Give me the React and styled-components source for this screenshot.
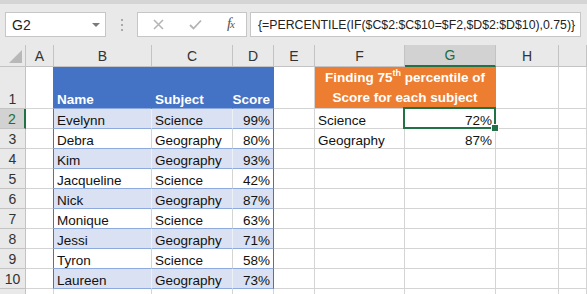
import React from 'react';
import styled, { createGlobalStyle, css } from 'styled-components';

const GlobalStyle = createGlobalStyle`
  html, body {
    margin: 0;
    padding: 0;
    background: #ffffff;
  }
  * {
    box-sizing: border-box;
  }
`;

const Window = styled.div`
  width: 587px;
  height: 294px;
  overflow: hidden;
  background: #ffffff;
  font-family: "Liberation Sans", Arial, sans-serif;
`;

const TopStrip = styled.div`
  height: 4px;
  background: #d5d5d5;
`;

const FormulaBar = styled.div`
  height: 41px;
  background: #e9e9e9;
  display: flex;
  align-items: center;
  padding-left: 5px;
  padding-right: 6px;
`;

const Box = styled.div`
  height: 25px;
  background: #ffffff;
  border: 1px solid #c6c6c6;
  display: flex;
  align-items: center;
`;

const NameBox = styled(Box)`
  width: 101px;
  justify-content: space-between;
  padding: 0 5px 0 6px;
  font-size: 14px;
  color: #222;
`;

const Caret = styled.span`
  width: 0;
  height: 0;
  border-left: 4px solid transparent;
  border-right: 4px solid transparent;
  border-top: 4px solid #7a7a7a;
`;

const Grip = styled.div`
  width: 31px;
  display: flex;
  flex-direction: column;
  align-items: center;
  gap: 3px;
`;

const Dot = styled.span`
  width: 2px;
  height: 2px;
  background: #a9a9a9;
`;

const ButtonBox = styled(Box)`
  width: 110px;
  padding: 0 12px 0 15px;
  justify-content: space-between;
`;

const Fx = styled.span`
  font-family: "Liberation Serif", "Times New Roman", serif;
  font-style: italic;
  font-size: 15px;
  color: #555;
  letter-spacing: -1px;
  margin-top: -2px;

  small {
    font-size: 11px;
  }
`;

const FormulaBox = styled(Box)`
  flex: 1;
  margin-left: 3px;
  padding-left: 7px;
  font-size: 12.3px;
  color: #222;
  white-space: nowrap;
`;

const Sheet = styled.div`
  display: grid;
  grid-template-columns: 26px 28px 98px 81px 41px 41px 90px 91px 63px 1fr;
  grid-template-rows: 22px 42px repeat(10, 20px);
`;

const HeadCell = styled.div`
  background: ${({ $selected }) => ($selected ? '#d2d2d2' : '#e9e9e9')};
  border-right: 1px solid #c3c3c3;
  border-bottom: ${({ $selected }) => ($selected ? '2px solid #217346' : '1px solid #c3c3c3')};
  display: flex;
  align-items: center;
  justify-content: center;
  font-size: 14px;
  color: ${({ $selected }) => ($selected ? '#1e6b41' : '#333')};
`;

const RowHead = styled.div`
  background: ${({ $selected }) => ($selected ? '#d2d2d2' : '#e9e9e9')};
  border-right: ${({ $selected }) => ($selected ? '2px solid #217346' : '1px solid #c3c3c3')};
  border-bottom: 1px solid #c3c3c3;
  display: flex;
  align-items: flex-end;
  justify-content: center;
  padding-bottom: 1px;
  font-size: 14px;
  color: ${({ $selected }) => ($selected ? '#1e6b41' : '#333')};
`;

const Corner = styled.div`
  background: #e9e9e9;
  border-right: 1px solid #c3c3c3;
  border-bottom: 1px solid #c3c3c3;
  display: flex;
  align-items: flex-end;
  justify-content: flex-end;
  padding: 0 3px 3px 0;
`;

const Cell = styled.div`
  background: ${({ $bg }) => $bg || '#ffffff'};
  border-right: 1px solid ${({ $vline }) => $vline || '#d4d4d4'};
  border-bottom: 1px solid ${({ $hline }) => $hline || '#d4d4d4'};
  display: flex;
  align-items: flex-end;
  justify-content: ${({ $right }) => ($right ? 'flex-end' : 'flex-start')};
  padding: 0 3px 0 3px;
  font-size: 13.5px;
  color: #111;
  white-space: nowrap;
  position: relative;
  ${({ $bold }) =>
    $bold &&
    css`
      font-weight: 700;
      color: #ffffff;
      padding-bottom: 1px;
    `}
  ${({ $span }) => $span && css`grid-column: span ${$span};`}
`;

const TitleCell = styled(Cell)`
  flex-direction: column;
  align-items: center;
  justify-content: flex-end;
  line-height: 20px;
  padding-bottom: 0;

  sup {
    font-size: 9px;
    line-height: 0;
    vertical-align: 6px;
  }
`;

const Selected = styled(Cell)`
  &::after {
    content: '';
    position: absolute;
    left: -2px;
    top: -2px;
    right: -1px;
    bottom: -1px;
    border: 2px solid #217346;
  }
  &::before {
    content: '';
    position: absolute;
    right: -4px;
    bottom: -4px;
    width: 6px;
    height: 6px;
    background: #217346;
    border: 1px solid #ffffff;
    z-index: 2;
  }
`;

const BLUE = '#4472c4';
const BAND = '#d9e1f2';
const TLINE = '#8ea9db';
const ORANGE = '#ed7d31';

const letters = ['A', 'B', 'C', 'D', 'E', 'F', 'G', 'H', ''];

const data = [
  ['Evelynn', 'Science', '99%'],
  ['Debra', 'Geography', '80%'],
  ['Kim', 'Geography', '93%'],
  ['Jacqueline', 'Science', '42%'],
  ['Nick', 'Geography', '87%'],
  ['Monique', 'Science', '63%'],
  ['Jessi', 'Geography', '71%'],
  ['Tyron', 'Science', '58%'],
  ['Laureen', 'Geography', '73%'],
];

const results = [
  ['Science', '72%'],
  ['Geography', '87%'],
];

const Blank = (props) => <Cell {...props} />;

function App() {
  const rows = [];

  // row 1: table header + orange title
  rows.push(
    <React.Fragment key="r1">
      <RowHead>1</RowHead>
      <Blank $vline={BLUE} />
      <Cell $bg={BLUE} $vline={BLUE} $hline={TLINE} $bold>Name</Cell>
      <Cell $bg={BLUE} $vline={BLUE} $hline={TLINE} $bold>Subject</Cell>
      <Cell $bg={BLUE} $vline={BLUE} $hline={TLINE} $bold $right>Score</Cell>
      <Blank />
      <TitleCell $bg={ORANGE} $vline={ORANGE} $span={2} $bold>
        <span>Finding 75<sup>th</sup> percentile of</span>
        <span>Score for each subject</span>
      </TitleCell>
      <Blank />
      <Blank />
    </React.Fragment>
  );

  for (let i = 0; i < 10; i++) {
    const n = i + 2;
    const row = data[i];
    const res = results[i];
    const banded = row && i % 2 === 0;
    const bg = banded ? BAND : '#ffffff';
    const inner = banded ? '#eef1f8' : '#d4d4d4';
    rows.push(
      <React.Fragment key={n}>
        {/* row 11 only peeks in at the bottom edge, its number stays hidden */}
        <RowHead $selected={n === 2}>{n <= 10 ? n : ''}</RowHead>
        <Blank $vline={row ? BLUE : undefined} />
        {row ? (
          <>
            <Cell $bg={bg} $vline={inner} $hline={TLINE}>{row[0]}</Cell>
            <Cell $bg={bg} $vline={inner} $hline={TLINE}>{row[1]}</Cell>
            <Cell $bg={bg} $vline={BLUE} $hline={TLINE} $right>{row[2]}</Cell>
          </>
        ) : (
          <>
            <Blank />
            <Blank />
            <Blank />
          </>
        )}
        <Blank />
        <Cell>{res ? res[0] : ''}</Cell>
        {n === 2 ? <Selected $right>{res[1]}</Selected> : <Cell $right>{res ? res[1] : ''}</Cell>}
        <Blank />
        <Blank />
      </React.Fragment>
    );
  }

  return (
    <Window>
      <GlobalStyle />
      <TopStrip />
      <FormulaBar>
        <NameBox>
          <span>G2</span>
          <Caret />
        </NameBox>
        <Grip>
          <Dot />
          <Dot />
          <Dot />
        </Grip>
        <ButtonBox>
          <svg width="11" height="11" viewBox="0 0 11 11">
            <path d="M1 1 L10 10 M10 1 L1 10" stroke="#b4b4b4" strokeWidth="1.5" fill="none" />
          </svg>
          <svg width="13" height="11" viewBox="0 0 13 11">
            <path d="M1 6 L4.5 9.5 L12 1.5" stroke="#b4b4b4" strokeWidth="1.8" fill="none" />
          </svg>
          <Fx>f<small>x</small></Fx>
        </ButtonBox>
        <FormulaBox>{'{=PERCENTILE(IF($C$2:$C$10=$F2,$D$2:$D$10),0.75)}'}</FormulaBox>
      </FormulaBar>
      <Sheet>
        <Corner>
          <svg width="13" height="13" viewBox="0 0 13 13">
            <polygon points="13,0 13,13 0,13" fill="#b8b8b8" />
          </svg>
        </Corner>
        {letters.map((l, i) => (
          <HeadCell key={i} $selected={l === 'G'}>{l}</HeadCell>
        ))}
        {rows}
      </Sheet>
    </Window>
  );
}

export default App;
